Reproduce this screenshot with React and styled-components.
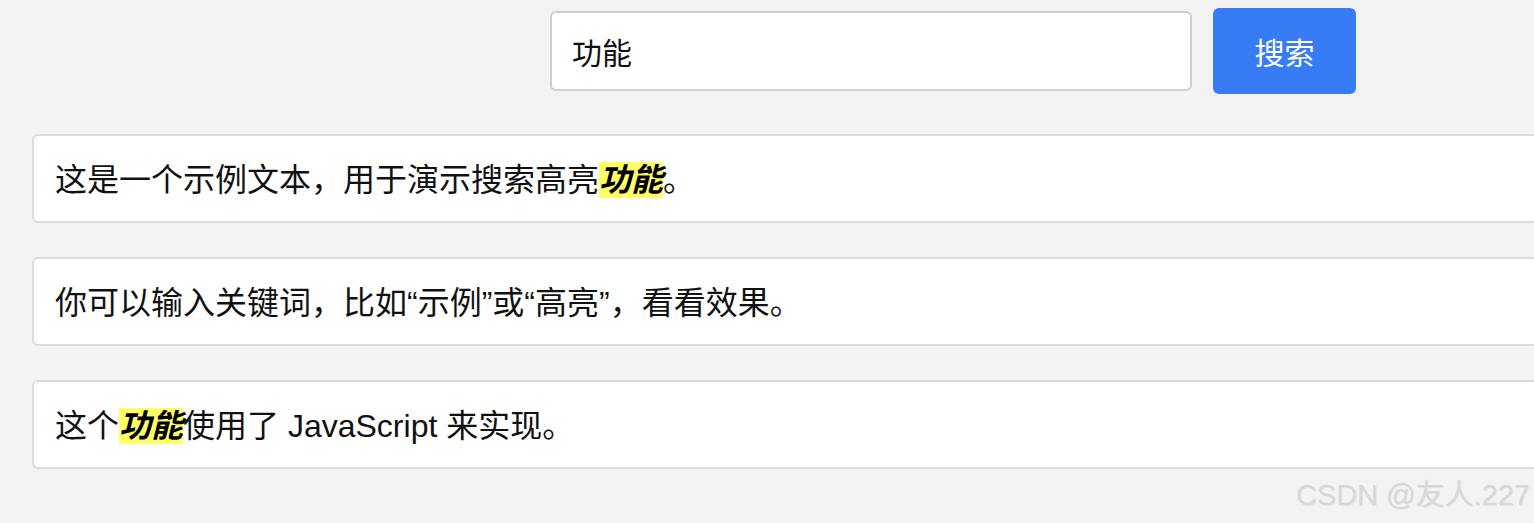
import React, { useState } from 'react'
import styled, { createGlobalStyle } from 'styled-components'

const GlobalStyle = createGlobalStyle`
  html, body {
    margin: 0;
    padding: 0;
    overflow: hidden;
    background: #f3f3f3;
  }
  body {
    font-family: "Liberation Sans", "Noto Sans CJK SC", sans-serif;
    color: #111;
  }
`

const Page = styled.div`
  position: relative;
  width: 1534px;
  height: 523px;
  overflow: hidden;
`

const Container = styled.div`
  width: 1842px;
  padding: 8px 0 0 32px;
`

const SearchRow = styled.form`
  display: flex;
  justify-content: center;
  align-items: center;
  gap: 21px;
  margin: 0 0 40px;
`

const SearchInput = styled.input`
  box-sizing: border-box;
  width: 642px;
  height: 80px;
  padding: 0 20px;
  border: 2px solid #cfcfcf;
  border-radius: 6px;
  background: #fff;
  font-family: "Liberation Sans", "Noto Sans CJK SC", sans-serif;
  font-size: 30px;
  color: #111;
  outline: none;
`

const SearchButton = styled.button`
  box-sizing: border-box;
  width: 143px;
  height: 86px;
  border: none;
  border-radius: 6px;
  background: #377bf5;
  color: #fff;
  font-family: "Liberation Sans", "Noto Sans CJK SC", sans-serif;
  font-size: 30px;
  cursor: pointer;
`

const Card = styled.div`
  box-sizing: border-box;
  height: 89px;
  margin-bottom: 34px;
  padding: 4px 21px 0;
  display: flex;
  align-items: center;
  border: 2px solid #dcdcdc;
  border-radius: 6px;
  background: #fff;
  font-size: 32px;
  line-height: 45px;
  white-space: nowrap;
`

const Highlight = styled.mark`
  background: #ffff66;
  color: #000;
  font-weight: bold;
  font-style: italic;
`

const Watermark = styled.div`
  position: absolute;
  right: 4px;
  bottom: 10px;
  font-size: 29px;
  color: #d8d8d8;
  text-shadow: 1px 1px 0 rgba(0, 0, 0, 0.08);
  pointer-events: none;
`

const texts = [
  '这是一个示例文本，用于演示搜索高亮功能。',
  '你可以输入关键词，比如“示例”或“高亮”，看看效果。',
  '这个功能使用了 JavaScript 来实现。',
]

function highlight(text, keyword) {
  if (!keyword) return text
  const parts = text.split(keyword)
  return parts.flatMap((p, i) =>
    i === 0 ? [p] : [<Highlight key={i}>{keyword}</Highlight>, p]
  )
}

export default function App() {
  const [query, setQuery] = useState('功能')
  const [keyword, setKeyword] = useState('功能')

  return (
    <>
      <GlobalStyle />
      <Page>
        <Container>
          <SearchRow
            onSubmit={(e) => {
              e.preventDefault()
              setKeyword(query)
            }}
          >
            <SearchInput value={query} onChange={(e) => setQuery(e.target.value)} />
            <SearchButton type="submit">搜索</SearchButton>
          </SearchRow>
          {texts.map((t, i) => (
            <Card key={i}>
              <span>{highlight(t, keyword)}</span>
            </Card>
          ))}
        </Container>
        <Watermark>CSDN @友人.227</Watermark>
      </Page>
    </>
  )
}
